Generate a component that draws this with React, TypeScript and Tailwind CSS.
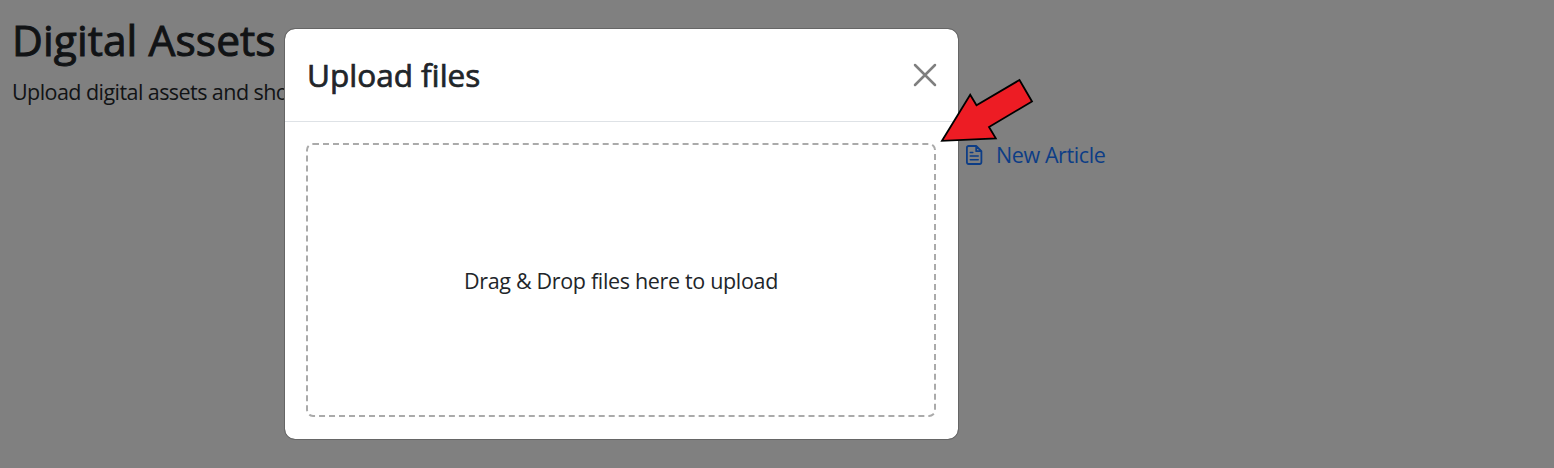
function CloseIcon() {
  return (
    <svg width="24" height="24" viewBox="0 0 24 24" fill="none" stroke="#7f7f7f" strokeWidth="2.5" strokeLinecap="round">
      <path d="M2 2 22 22M22 2 2 22" />
    </svg>
  );
}

function ArticleIcon() {
  return (
    <svg width="18" height="22" viewBox="0 0 18 22" fill="none" stroke="#0d3d86" strokeWidth="1.8" strokeLinecap="round" strokeLinejoin="round">
      <path d="M11.2 2H3.6A1.7 1.7 0 0 0 1.9 3.7V18.3A1.7 1.7 0 0 0 3.6 20H14.7A1.7 1.7 0 0 0 16.4 18.3V7.2ZM11.2 2V7.2H16.4" />
      <path d="M5.3 8.5H7.8M5.3 12H13.2M5.3 15.8H13.2" strokeWidth="1.6" />
    </svg>
  );
}

function UploadDialog() {
  return (
    <section role="dialog" className="absolute left-[284px] top-7 flex h-[412px] w-[675px] flex-col rounded-[11px] border border-[#666666] bg-white bg-clip-padding text-[#212529]">
      <header className="flex h-[93px] shrink-0 items-center justify-between border-b border-[#dee2e6] pl-[22px] pr-[21px]">
        <h2 className="whitespace-nowrap pb-px text-[31.5px] leading-[48px] [-webkit-text-stroke:0.7px_#212529]">Upload files</h2>
        <button aria-label="Close"><CloseIcon /></button>
      </header>
      <div className="flex grow pb-[22px] pl-[21px] pr-[22px] pt-[21px]">
        <div className="flex grow items-center justify-center rounded-[7px] border-2 border-dashed border-[#aaaaaa]">
          <p className="whitespace-nowrap pt-px text-[21.5px] leading-8 tracking-[-0.33px]">Drag &amp; Drop files here to upload</p>
        </div>
      </div>
    </section>
  );
}

export default function App() {
  return (
    <main className="relative h-[468px] w-full overflow-hidden bg-[#808080] font-['Open_Sans','Noto_Sans',sans-serif] text-[#111315]">
      <div className="flex flex-col px-3 pt-[14px]">
        <h1 className="whitespace-nowrap text-[42.5px] leading-[51px] tracking-[0.08px] [-webkit-text-stroke:1px_#111315]">Digital Assets</h1>
        <p className="mt-[11px] whitespace-nowrap text-[21.5px] leading-8 tracking-[-0.56px]">Upload digital assets and sho</p>
        <a className="ml-[953px] mt-[31px] flex items-center gap-[13px] whitespace-nowrap text-[21.5px] leading-8 tracking-[-0.4px] text-[#0d3d86]">
          <ArticleIcon />
          <span>New Article</span>
        </a>
      </div>
      <UploadDialog />
      <svg className="absolute left-[936px] top-[74px]" width="102" height="74" viewBox="936 74 102 74">
        <path d="M942 140.8 970.2 94.8 976.5 105.3 1019.5 80 1032 101.5 989 127 995.8 138.3Z" fill="#ed1c24" stroke="#000" strokeWidth="1.8" />
      </svg>
    </main>
  );
}
